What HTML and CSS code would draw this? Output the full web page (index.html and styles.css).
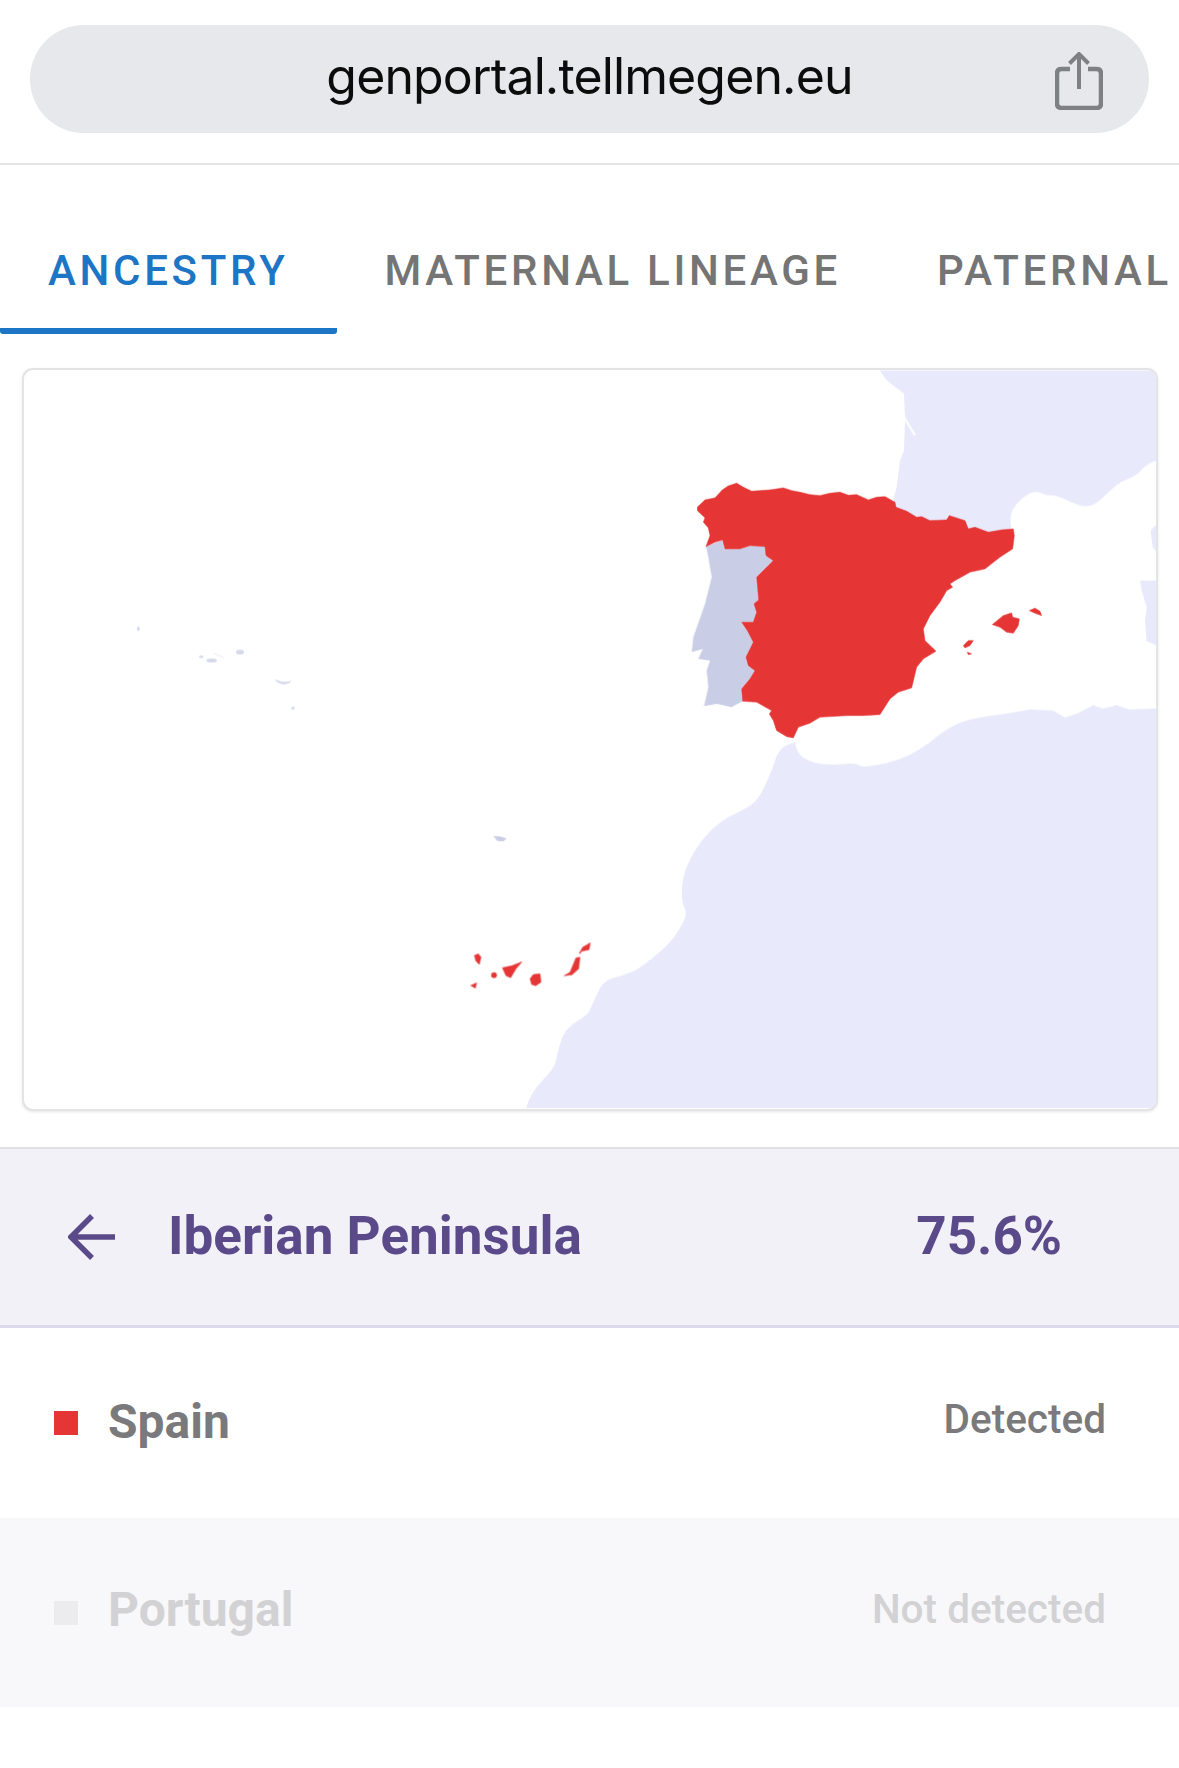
FILE: index.html
```html
<!DOCTYPE html>
<html lang="en">
<head>
<meta charset="utf-8">
<title>genportal.tellmegen.eu</title>
<link rel="stylesheet" href="styles.css">
</head>
<body>
<header class="browser-bar">
  <div class="url-pill">
    <span class="url-text">genportal.tellmegen.eu</span>
    <svg class="share-icon" viewBox="0 0 48 58" aria-hidden="true">
      <path d="M15 17H6.500C3.500 17 2 18.500 2 21.500V51.500C2 54.500 3.500 56 6.500 56H41.500C44.500 56 46 54.500 46 51.500V21.500C46 18.500 44.500 17 41.500 17H33" class="share-box"/>
      <path d="M24 37V3M14.500 11.500L24 2L33.500 11.500" class="share-arrow"/>
    </svg>
  </div>
</header>

<nav class="tabs">
  <div class="tab tab-active">ANCESTRY</div>
  <div class="tab">MATERNAL LINEAGE</div>
  <div class="tab">PATERNAL</div>
</nav>

<section class="map-card">
  <svg class="map" viewBox="24 370 1132 738" aria-label="Map of the Iberian Peninsula">
    <g class="sea">
      <g transform="translate(780 360) scale(.3333)">
        <path d="M300 30H1130V300Q1100 310 1085 327.500 1070 345 1045 355 1020 365 1002.500 380 985 395 967.500 412.500 950 430 932.500 435 915 440 900 435 885 430 857.500 417.500 830 405 815 405 800 405 782.500 397.500 765 390 747.500 400 730 410 715 425 700 440 695 455 690 470 692 490L695 515 640 560 500 560 345 500 340 415 350 380 360 300 372 270 375 180 372 100 340 75 320 60Z"/>
        <path d="M1130 490L1112 510 1118 560 1130 575ZM1080 660L1130 660V855L1100 842 1095 780 1100 740 1085 690Z"/>
      </g>
      <path d="M1157 708L1130 709 1117 705 1103 708 1093 705 1077 713 1065 717 1053 710 1030 709Q1007 713 988.500 715.500 970 718 958.500 723 947 728 938.500 735 930 742 920 748.500 910 755 898.500 759 887 763 873.500 765 860 767 858.500 764.500 857 762 842 763.500 827 765 817 762.500 807 760 802 756 797 752 795 742 780 745 776.500 756 773 767 768 778.500 763 790 758 797.500 753 805 736.500 812.500 720 820 708.500 832.500 697 845 690 859 683 873 682 886.500 681 900 684 906 687 912 685 917.500 683 923 676.500 933 670 943 655 955.500 640 968 631.500 971.500 623 975 613 977.500 603 980 597.500 992.500 592 1005 589.500 1010 587 1015 576 1021.500 565 1028 561 1040.500 557 1053 556 1060 555 1067 542.500 1080 530 1093 526 1108H1157Z"/>
    </g>
    <g transform="translate(780 360) scale(.3333)">
      <path class="land-notch" d="M350 125L375 175 405 225"/>
    </g>
    <g class="portugal">
      <g transform="translate(660 440) scale(.3333)">
        <path d="M138 318L188 298 195 325 240 325 270 315 315 318 318 345 340 360 290 410 296 478 282 490 290 515 280 545 245 545 262 570 280 605 258 650 265 675 285 690 270 715 245 745 248 782 215 800 170 790 132 797 145 740 140 690 150 660 115 655 128 625 95 635 100 590 135 490 155 410 145 350Z"/>
      </g>
      <g transform="translate(440 700) scale(.3333)">
        <path d="M160 407L180 408 200 414 190 423 172 421Z"/>
      </g>
      <g class="azores" transform="translate(100 600) scale(.3333)">
        <ellipse cx="115" cy="85" rx="4" ry="7"/>
        <ellipse cx="304" cy="169" rx="7" ry="4"/>
        <ellipse cx="335" cy="180" rx="16" ry="6"/>
        <path d="M342 158L372 172" class="azores-line"/>
        <ellipse cx="420" cy="155" rx="12" ry="7"/>
        <path d="M525 236Q550 248 575 241 570 252 548 251 530 248 525 236Z"/>
        <circle cx="579" cy="323" r="5"/>
      </g>
    </g>
    <g class="spain">
      <g transform="translate(660 440) scale(.3333)">
        <path d="M112 200L135 178 165 172 187 148 205 136 230 128 250 140 275 152 330 148 370 142 395 150 420 155 450 162 480 165 510 158 540 155 565 164 590 162 625 178 650 170 675 168 705 185 708 200 740 212 770 230 785 228 810 240 860 238 868 225 915 240 925 265 945 260 985 275 1025 268 1060 265 1063 285 1058 325 1020 350 975 385 930 395 885 420 870 430 878 440 860 450 840 485 810 525 790 565 795 600 828 632 790 655 770 680 755 742 715 755 690 775 660 822 610 825 560 825 480 830 450 848 415 860 400 892 380 888 350 870 340 840 328 820 335 810 290 785 248 782 245 745 270 715 285 690 265 675 258 650 280 605 262 570 245 545 280 545 290 515 282 490 296 478 290 410 340 360 318 345 315 318 270 315 240 325 195 325 188 298 165 305 138 318 150 285 145 262 130 245 135 232 112 210Z"/>
        <path d="M997 552L1030 525 1055 517 1058 530 1078 535 1075 555 1060 578 1040 575 1020 560Z"/>
        <path d="M1108 510L1125 503 1140 512 1145 525 1125 518Z"/>
        <path d="M910 615L925 600 940 600 930 615 915 622Z"/>
        <path d="M922 635L935 640 925 642Z"/>
      </g>
      <g transform="translate(440 700) scale(.3333)">
        <path d="M103 765L115 760 123 770 118 792 108 782Z"/>
        <circle cx="162" cy="824" r="8"/>
        <path d="M92 855L110 847 106 863Z"/>
        <path d="M187 802L215 796 246 784 228 805 212 832 198 826Z"/>
        <path d="M270 835L280 822 300 820 303 845 287 856 275 852Z"/>
        <path d="M372 826L390 815 408 772 420 770 416 805 396 823Z"/>
        <path d="M418 758L428 740 451 727 447 748 425 752 420 760Z"/>
      </g>
    </g>
  </svg>
</section>

<section class="region-panel">
  <svg class="back-icon" viewBox="0 0 49 46" aria-hidden="true">
    <path d="M47 23H4M24 2L3 23 24 44"/>
  </svg>
  <span class="region-name">Iberian Peninsula</span>
  <span class="region-value">75.6%</span>
</section>

<section class="country-row">
  <span class="swatch swatch-red"></span>
  <span class="country-name">Spain</span>
  <span class="country-status">Detected</span>
</section>
<section class="country-row country-row-off">
  <span class="swatch swatch-off"></span>
  <span class="country-name country-name-off">Portugal</span>
  <span class="country-status">Not detected</span>
</section>
</body>
</html>
```

FILE: styles.css
```css
* {
  box-sizing: border-box;
}

html,
body {
  margin: 0;
  background: #fff;
}

body {
  width: 1179px;
  height: 1768px;
  overflow: hidden;
  font-family: Roboto, "Liberation Sans", sans-serif;
}

.browser-bar {
  height: 165px;
  padding: 25px 30px 0;
  border-bottom: 2px solid #e2e3e5;
}

.url-pill {
  position: relative;
  display: flex;
  align-items: center;
  justify-content: center;
  height: 108px;
  border-radius: 54px;
  background: #e6e8eb;
}

.url-text {
  font-family: Inter, "Liberation Sans", sans-serif;
  font-size: 50px;
  letter-spacing: -0.87px;
  color: #0c0c0d;
  margin-top: -6px;
}

.share-icon {
  position: absolute;
  top: 27px;
  right: 46px;
  width: 48px;
  height: 58px;
  fill: none;
  stroke: #7e8184;
}

.share-box {
  stroke-width: 4.500;
}

.share-arrow {
  stroke-width: 4;
}

.tabs {
  display: flex;
  height: 169px;
  padding-top: 60px;
  overflow: hidden;
  white-space: nowrap;
}

.tab {
  flex: none;
  height: 109px;
  padding: 21px 48px 0;
  font-size: 42px;
  line-height: 50px;
  font-weight: 500;
  letter-spacing: 3.700px;
  color: #757575;
}

.tab-active {
  color: #1c75c5;
  border-bottom: 6px solid #1c75c5;
  border-radius: 0 0 3px 3px;
}

.map-card {
  height: 743px;
  margin: 34px 21px 36px 22px;
  border: 2px solid #e4e4e7;
  border-radius: 11px;
  overflow: hidden;
  background: #fff;
  box-shadow: 0 1px 3px rgba(0, 0, 0, 0.1);
}

.map {
  display: block;
  width: 100%;
  height: 100%;
}

.sea {
  fill: #e8eafc;
  filter: blur(0.7px);
}

.land-notch {
  fill: none;
  stroke: #fff;
  stroke-width: 6;
}

.portugal {
  fill: #c9cde6;
  filter: blur(0.6px);
}

.azores {
  opacity: 0.75;
}

.azores-line {
  fill: none;
  stroke: #d5d7ea;
  stroke-width: 2;
}

.spain {
  fill: #e53535;
  stroke: #e53535;
  stroke-width: 1.500;
  stroke-linejoin: round;
  filter: blur(0.5px);
}

.region-panel {
  display: flex;
  align-items: center;
  height: 181px;
  padding: 0 117px 0 68px;
  border-top: 2px solid #e2e2e6;
  border-bottom: 3px solid #dcdaea;
  background: #f2f1f7;
  color: #5b4a8a;
  font-size: 53px;
  line-height: 60px;
  font-weight: 700;
}

.back-icon {
  flex: none;
  width: 49px;
  height: 46px;
  margin-right: 51px;
  fill: none;
  stroke: #5b4a8a;
  stroke-width: 5.500;
}

.region-name {
  flex: 1;
  margin-top: -2px;
}

.region-value {
  margin-top: -2px;
}

.country-row {
  display: flex;
  align-items: center;
  height: 190px;
  padding: 0 73px 0 54px;
  font-weight: 700;
  color: #7a7a7c;
}

.country-row-off {
  height: 189px;
  background: #f8f8fb;
  color: #d2d2d4;
}

.swatch {
  flex: none;
  width: 24px;
  height: 24px;
  margin-right: 30px;
}

.swatch-red {
  background: #e53535;
}

.swatch-off {
  background: #ececef;
}

.country-name {
  flex: 1;
  font-size: 48px;
  margin-top: -4px;
}

.country-name-off {
  margin-top: -6px;
}

.country-status {
  font-size: 40.500px;
  font-weight: 500;
  margin-top: -8px;
}
```
